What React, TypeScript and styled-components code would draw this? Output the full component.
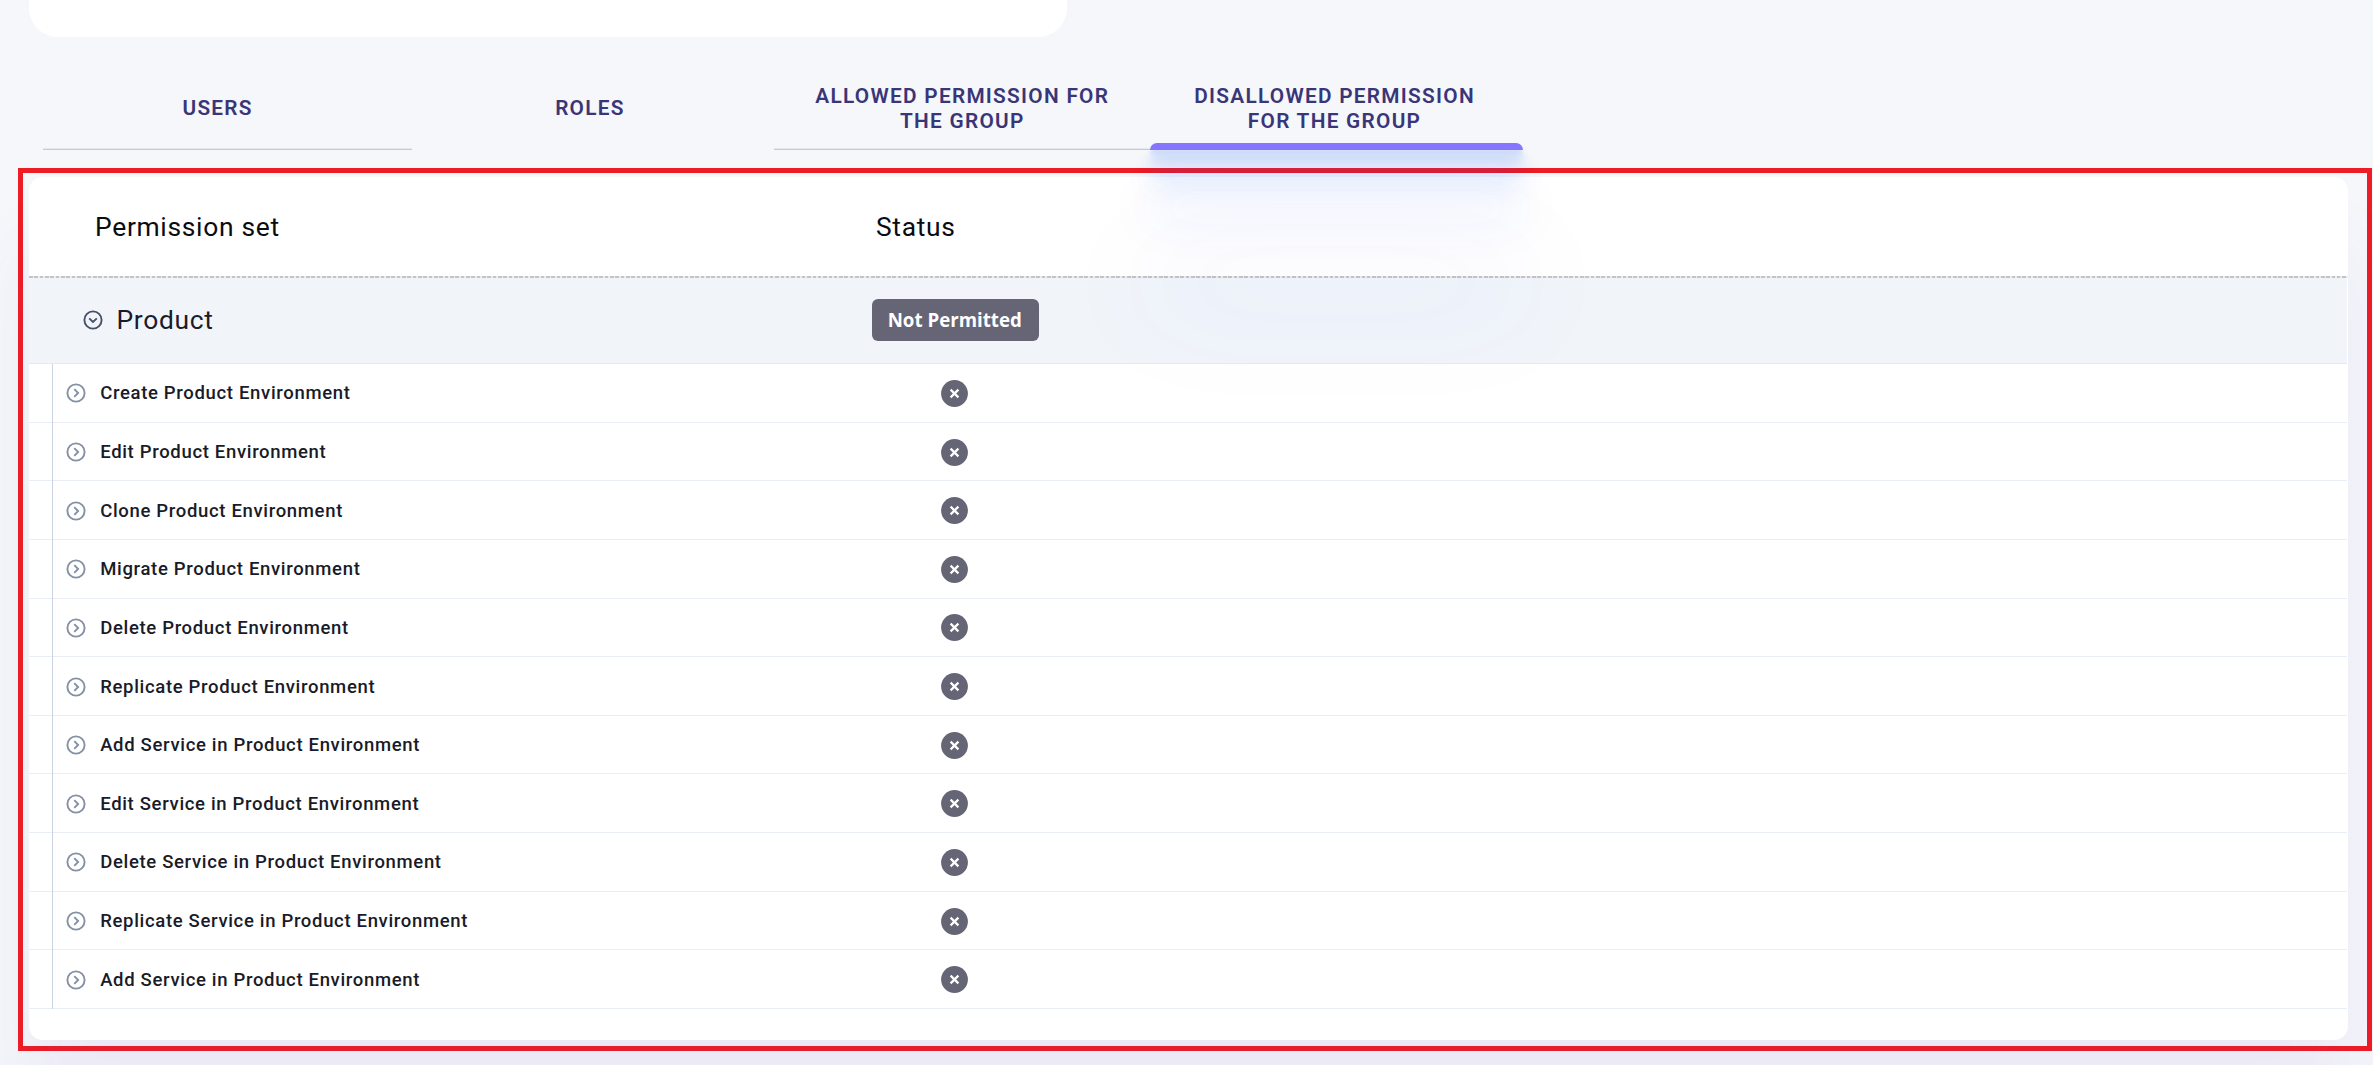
import React from "react";
import styled, { createGlobalStyle } from "styled-components";

const GlobalStyle = createGlobalStyle`
  * { box-sizing: border-box; }
  body { margin: 0; background: #f5f7fb; font-family: Roboto, "Liberation Sans", sans-serif; }
`;

const Page = styled.main`
  height: 1065px;
  overflow: hidden;
  display: flex;
  flex-direction: column;
`;

const SummaryCard = styled.section`
  flex: none;
  width: 1038px;
  height: 37px;
  margin-left: 29px;
  background: #fff;
  border-radius: 0 0 29px 29px;
`;

const TabBar = styled.nav`
  flex: none;
  display: flex;
  height: 113px;
  padding: 30px 0 0 31.5px;
`;

const Tab = styled.button`
  position: relative;
  width: 372.3px;
  height: 83px;
  padding: 1px 30px 0;
  border: 0;
  background: none;
  display: flex;
  align-items: center;
  justify-content: center;
  text-align: center;
  font: 600 20.8px/25.3px Roboto, "Liberation Sans", sans-serif;
  letter-spacing: 1.28px;
  color: #393577;
`;

const TabLine = styled.span<{ $from: number; $to: number }>`
  position: absolute;
  left: ${(p) => p.$from}px;
  right: ${(p) => p.$to}px;
  bottom: 0;
  height: 2px;
  background: linear-gradient(#e6e7ef 50%, #c8c8da 50%);
`;

const ActiveLine = styled.span`
  position: absolute;
  z-index: 2;
  left: 2px;
  right: -2px;
  bottom: 0;
  height: 7px;
  border-radius: 7px 7px 0 0;
  background: #8676ff;
  box-shadow:
    0 4px 3px rgba(20, 100, 240, 0.1),
    0 9.7px 7.7px rgba(20, 100, 240, 0.14),
    0 18px 14.7px rgba(20, 90, 245, 0.19),
    0 32px 26px rgba(20, 90, 250, 0.27),
    0 61px 48px rgba(20, 80, 250, 0.25),
    0 137px 110px rgba(60, 60, 220, 0.35);
`;

const Highlight = styled.div`
  flex: none;
  width: 2354px;
  height: 883px;
  margin: 18px 0 0 18px;
  padding: 4px 19px 6px 6px;
  border: 5px solid #ee1c24;
`;

const Panel = styled.section`
  height: 863px;
  background: #fff;
  border-radius: 14px;
  box-shadow: 0 73px 80px rgba(130, 80, 175, 0.08);
`;

const Columns = styled.div`
  display: grid;
  grid-template-columns: 846px 1fr;
  align-items: center;
`;

const HeaderRow = styled(Columns)`
  height: 101px;
  padding-bottom: 2px;
  background: repeating-linear-gradient(90deg, #c4c4c4 0 3.6px, #ececec 3.6px 5.33px) 0 100% / 100% 2px no-repeat;
  font-size: 26.4px;
  letter-spacing: 0.7px;
  color: #0b0b12;
`;

const HeaderCell = styled.div<{ $indent?: number }>`
  padding-left: ${(p) => p.$indent || 0}px;
`;

const GroupRow = styled(Columns)`
  height: 86px;
  padding-bottom: 1px;
  margin-right: 1px;
  border-bottom: 1px solid #e4eaf4;
  background: #f1f5fa;
`;

const GroupName = styled.div`
  display: flex;
  align-items: center;
  gap: 14px;
  padding-left: 53.5px;
  font-size: 26.4px;
  letter-spacing: 0.7px;
  color: #1a1b2b;
`;

const StatusBadge = styled.span`
  justify-self: start;
  display: flex;
  align-items: center;
  justify-content: center;
  width: 166.5px;
  height: 42px;
  margin-left: -3px;
  padding: 0 1px 2px 0;
  border-radius: 6px;
  background: #666576;
  color: #fff;
  font: 700 18.7px "Open Sans", sans-serif;
`;

const PermissionList = styled.ul`
  margin: 0 1px 0 0;
  padding: 0;
  list-style: none;
`;

const PermissionRow = styled.li`
  display: grid;
  grid-template-columns: 24px 822px 1fr;
  height: 58.64px;
  border-bottom: 1.5px solid #e9edf5;
`;

const TreeGutter = styled.span`
  margin-bottom: -1px;
  border-right: 1px solid #cbd5e1;
`;

const PermissionName = styled.div`
  display: flex;
  align-items: center;
  gap: 14px;
  padding: 1.2px 0 0 13.2px;
  font-size: 18.5px;
  font-weight: 500;
  letter-spacing: 0.67px;
  color: #191b28;
`;

const PermissionStatus = styled.div`
  display: flex;
  align-items: center;
  padding: 1.2px 0 0 66px;
`;

const ArrowIcon = ({ down }: { down?: boolean }) => (
  <svg width="20" height="20" viewBox="0 0 20 20" fill="none" stroke={down ? "#475069" : "#8490a5"} strokeWidth="1.9">
    <circle cx="10" cy="10" r="8.6" />
    <path d={down ? "M6.2 8.4 10 12l3.8-3.6" : "M8.3 6.2 12.1 10l-3.8 3.8"} />
  </svg>
);

const DeniedIcon = () => (
  <svg width="27" height="27" viewBox="0 0 27 27">
    <circle cx="13.5" cy="13.5" r="13.4" fill="#666576" />
    <path d="M9.6 9.6l7.8 7.8M17.4 9.6l-7.8 7.8" stroke="#fff" strokeWidth="2.2" />
  </svg>
);

const permissions = [
  "Create Product Environment",
  "Edit Product Environment",
  "Clone Product Environment",
  "Migrate Product Environment",
  "Delete Product Environment",
  "Replicate Product Environment",
  "Add Service in Product Environment",
  "Edit Service in Product Environment",
  "Delete Service in Product Environment",
  "Replicate Service in Product Environment",
  "Add Service in Product Environment",
];

export default function App() {
  return (
    <Page>
      <GlobalStyle />
      <SummaryCard />
      <TabBar>
        <Tab>USERS<TabLine $from={11.5} $to={-8} /></Tab>
        <Tab>ROLES</Tab>
        <Tab>ALLOWED PERMISSION FOR THE GROUP<TabLine $from={-2} $to={-4} /></Tab>
        <Tab>DISALLOWED PERMISSION FOR THE GROUP<ActiveLine /></Tab>
      </TabBar>
      <Highlight>
        <Panel>
          <HeaderRow>
            <HeaderCell $indent={66}>Permission set</HeaderCell>
            <HeaderCell $indent={1}>Status</HeaderCell>
          </HeaderRow>
          <GroupRow>
            <GroupName><ArrowIcon down />Product</GroupName>
            <StatusBadge>Not Permitted</StatusBadge>
          </GroupRow>
          <PermissionList>
            {permissions.map((name, i) => (
              <PermissionRow key={i}>
                <TreeGutter />
                <PermissionName><ArrowIcon />{name}</PermissionName>
                <PermissionStatus><DeniedIcon /></PermissionStatus>
              </PermissionRow>
            ))}
          </PermissionList>
        </Panel>
      </Highlight>
    </Page>
  );
}
